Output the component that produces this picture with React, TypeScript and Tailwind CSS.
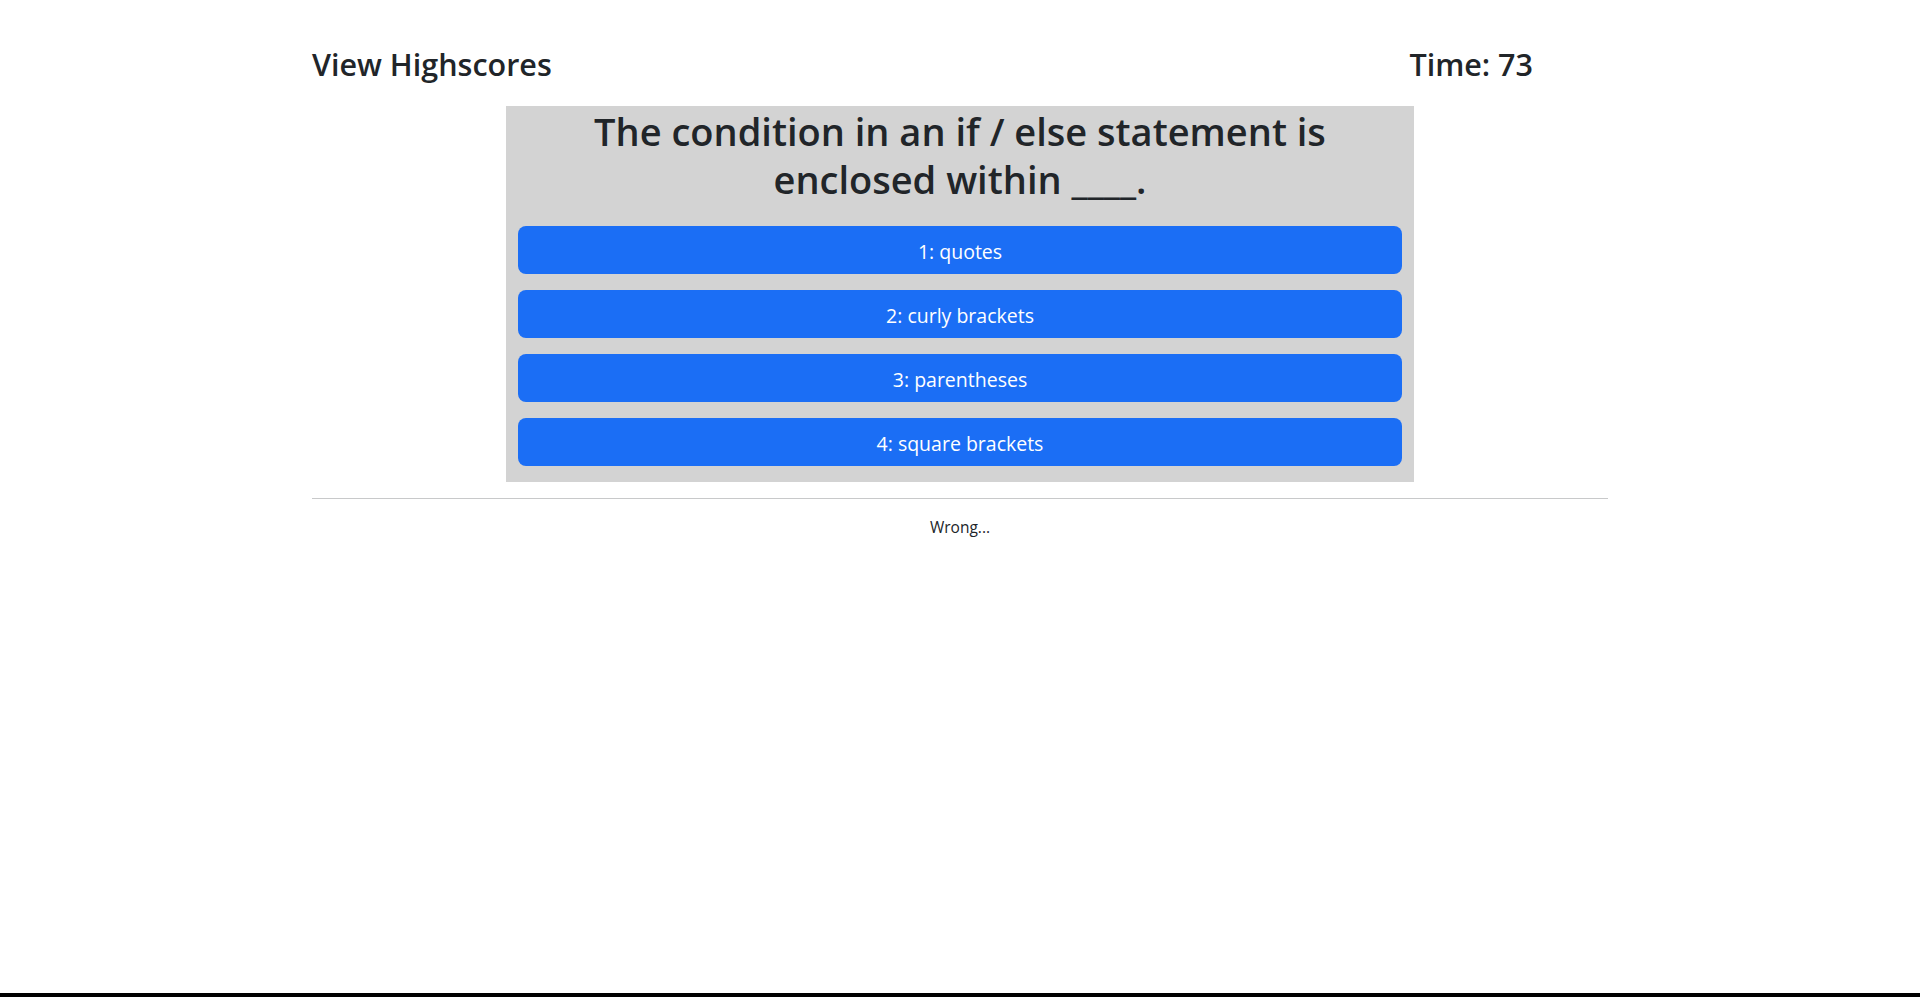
import React from "react";

const choices = ["1: quotes", "2: curly brackets", "3: parentheses", "4: square brackets"];

export default function App() {
  return (
    <div
      className="min-h-[997px] flex flex-col bg-white text-[#212529]"
      style={{ fontFamily: '"Open Sans", "Noto Sans", sans-serif' }}
    >
      <div className="flex-1">
        <div className="w-[1296px] mx-auto">
          {/* header */}
          <div className="flex justify-between items-center pt-[45px] pr-[75px]">
            <h2 className="text-[30.5px] leading-[38px] font-semibold">View Highscores</h2>
            <h2 className="text-[30.5px] leading-[38px] font-semibold">Time: 73</h2>
          </div>

          {/* question card */}
          <div className="w-[908px] mx-auto mt-[23px] bg-[#d3d3d3] px-3 pb-4">
            <h1 className="text-[38px] leading-[48px] font-semibold text-center px-[60px] pt-px">
              The condition in an if / else statement is enclosed within ____.
            </h1>
            <div className="mt-[23px] flex flex-col gap-4">
              {choices.map((c) => (
                <button
                  key={c}
                  className="h-12 w-full rounded-lg bg-[#1b6ef5] text-white text-[19.5px] leading-[30px] pt-[3px]"
                >
                  {c}
                </button>
              ))}
            </div>
          </div>

          <hr className="mt-4 border-t border-[#c8c9ca]" />
          <p className="mt-4 text-center text-[15.5px] leading-6">Wrong...</p>
        </div>
      </div>
      <div className="h-[4px] bg-black" />
    </div>
  );
}
